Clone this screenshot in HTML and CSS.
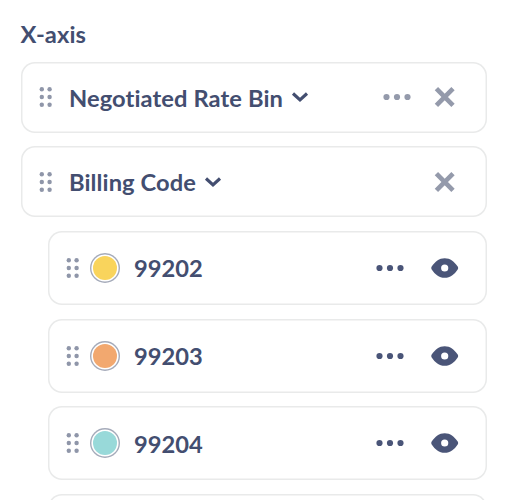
FILE: index.html
```html
<!DOCTYPE html>
<html lang="en">
<head>
<meta charset="utf-8">
<title>Chart settings</title>
<link rel="stylesheet" href="styles.css">
</head>
<body>
<svg class="defs" aria-hidden="true">
  <symbol id="grip" viewBox="0 0 14 22">
    <circle cx="2.8" cy="3.2" r="2.2"/><circle cx="10.6" cy="3.2" r="2.2"/>
    <circle cx="2.8" cy="11" r="2.2"/><circle cx="10.6" cy="11" r="2.2"/>
    <circle cx="2.8" cy="18.8" r="2.2"/><circle cx="10.6" cy="18.8" r="2.2"/>
  </symbol>
  <symbol id="dots" viewBox="0 0 28 28">
    <circle cx="3.5" cy="14" r="3.1"/><circle cx="14" cy="14" r="3.1"/><circle cx="24.5" cy="14" r="3.1"/>
  </symbol>
  <symbol id="close" viewBox="0 0 28 28">
    <path d="M5.4 5.7 22 22.3M22 5.7 5.4 22.3" fill="none" stroke="currentColor" stroke-width="4.7"/>
  </symbol>
  <symbol id="eye" viewBox="0 0 28 28">
    <path fill-rule="evenodd" d="M13.7 4.2C19.3 4.2 23.3 7.6 26.7 12.6Q27.6 14 26.7 15.4C23.3 20.4 19.3 23.8 13.7 23.8S4.1 20.4 .7 15.4Q-.2 14 .7 12.6C4.1 7.6 8.1 4.2 13.7 4.2ZM13.7 10.4A3.6 3.6 0 1 0 13.7 17.6 3.6 3.6 0 1 0 13.7 10.4Z"/>
  </symbol>
  <symbol id="chevron" viewBox="0 0 18 12">
    <path d="M2 2.5 9 9 16 2.5" fill="none" stroke="currentColor" stroke-width="3.1"/>
  </symbol>
</svg>
<main class="panel">
  <h2 class="title">X-axis</h2>
  <div class="list">
    <div class="card">
      <svg class="grip"><use href="#grip"/></svg>
      <span class="label">Negotiated Rate Bin</span>
      <svg class="chevron"><use href="#chevron"/></svg>
      <div class="actions muted">
        <svg class="icon"><use href="#dots"/></svg>
        <svg class="icon"><use href="#close"/></svg>
      </div>
    </div>
    <div class="card">
      <svg class="grip"><use href="#grip"/></svg>
      <span class="label">Billing Code</span>
      <svg class="chevron"><use href="#chevron"/></svg>
      <div class="actions muted">
        <svg class="icon"><use href="#close"/></svg>
      </div>
    </div>
    <div class="series">
      <div class="card item">
        <svg class="grip"><use href="#grip"/></svg>
        <span class="swatch yellow"></span>
        <span class="label">99202</span>
        <div class="actions">
          <svg class="icon"><use href="#dots"/></svg>
          <svg class="icon"><use href="#eye"/></svg>
        </div>
      </div>
      <div class="card item">
        <svg class="grip"><use href="#grip"/></svg>
        <span class="swatch orange"></span>
        <span class="label">99203</span>
        <div class="actions">
          <svg class="icon"><use href="#dots"/></svg>
          <svg class="icon"><use href="#eye"/></svg>
        </div>
      </div>
      <div class="card item">
        <svg class="grip"><use href="#grip"/></svg>
        <span class="swatch teal"></span>
        <span class="label">99204</span>
        <div class="actions">
          <svg class="icon"><use href="#dots"/></svg>
          <svg class="icon"><use href="#eye"/></svg>
        </div>
      </div>
      <div class="card item"></div>
    </div>
  </div>
</main>
</body>
</html>
```
FILE: styles.css
```css
* {
  box-sizing: border-box;
}

body {
  margin: 0;
  background: #fff;
  color: #434e70;
  font: 700 23.7px/30px Lato, sans-serif;
  font-variant-ligatures: none;
}

svg {
  display: block;
  flex: none;
  overflow: visible;
  fill: currentColor;
}

.defs {
  position: absolute;
  width: 0;
  height: 0;
  overflow: hidden;
}

.panel {
  height: 500px;
  overflow: hidden;
  padding: 19px 31.3px 0 20.5px;
}

.title {
  margin: 0 0 13px;
  font-size: 23.7px;
  line-height: 30px;
  letter-spacing: 0.1px;
}

.list {
  display: flex;
  flex-direction: column;
  gap: 13.5px;
}

.series {
  display: flex;
  flex-direction: column;
  gap: 13.8px;
  margin-left: 27px;
}

.card {
  display: flex;
  flex: none;
  align-items: center;
  height: 70.9px;
  padding: 0 28px 0 18px;
  border-radius: 14px;
  box-shadow: inset 0 0 0 1.5px #e9eaea;
}

.item {
  height: 74px;
}

.grip {
  width: 14px;
  height: 22px;
  margin-right: 16.5px;
  color: #8f96a9;
}

.item .grip {
  margin-right: 10px;
}

.label {
  padding-top: 1px;
  letter-spacing: 0.09px;
}

.item .label {
  letter-spacing: 0;
}

.chevron {
  width: 18px;
  height: 12px;
  margin-left: 8.4px;
}

.swatch {
  width: 30px;
  height: 30px;
  margin-right: 14.5px;
  border-radius: 50%;
  padding: 3px;
  background-clip: content-box;
  box-shadow: inset 0 0 0 1.4px #a5abba;
}

.yellow {
  background-color: #f9d45c;
}

.orange {
  background-color: #f2a86f;
}

.teal {
  background-color: #98d9d9;
}

.actions {
  display: flex;
  gap: 19.5px;
  margin-left: auto;
}

.item .actions {
  gap: 26.8px;
  color: #4a5578;
}

.icon {
  width: 28px;
  height: 28px;
}

.muted {
  color: #949aab;
}
```
